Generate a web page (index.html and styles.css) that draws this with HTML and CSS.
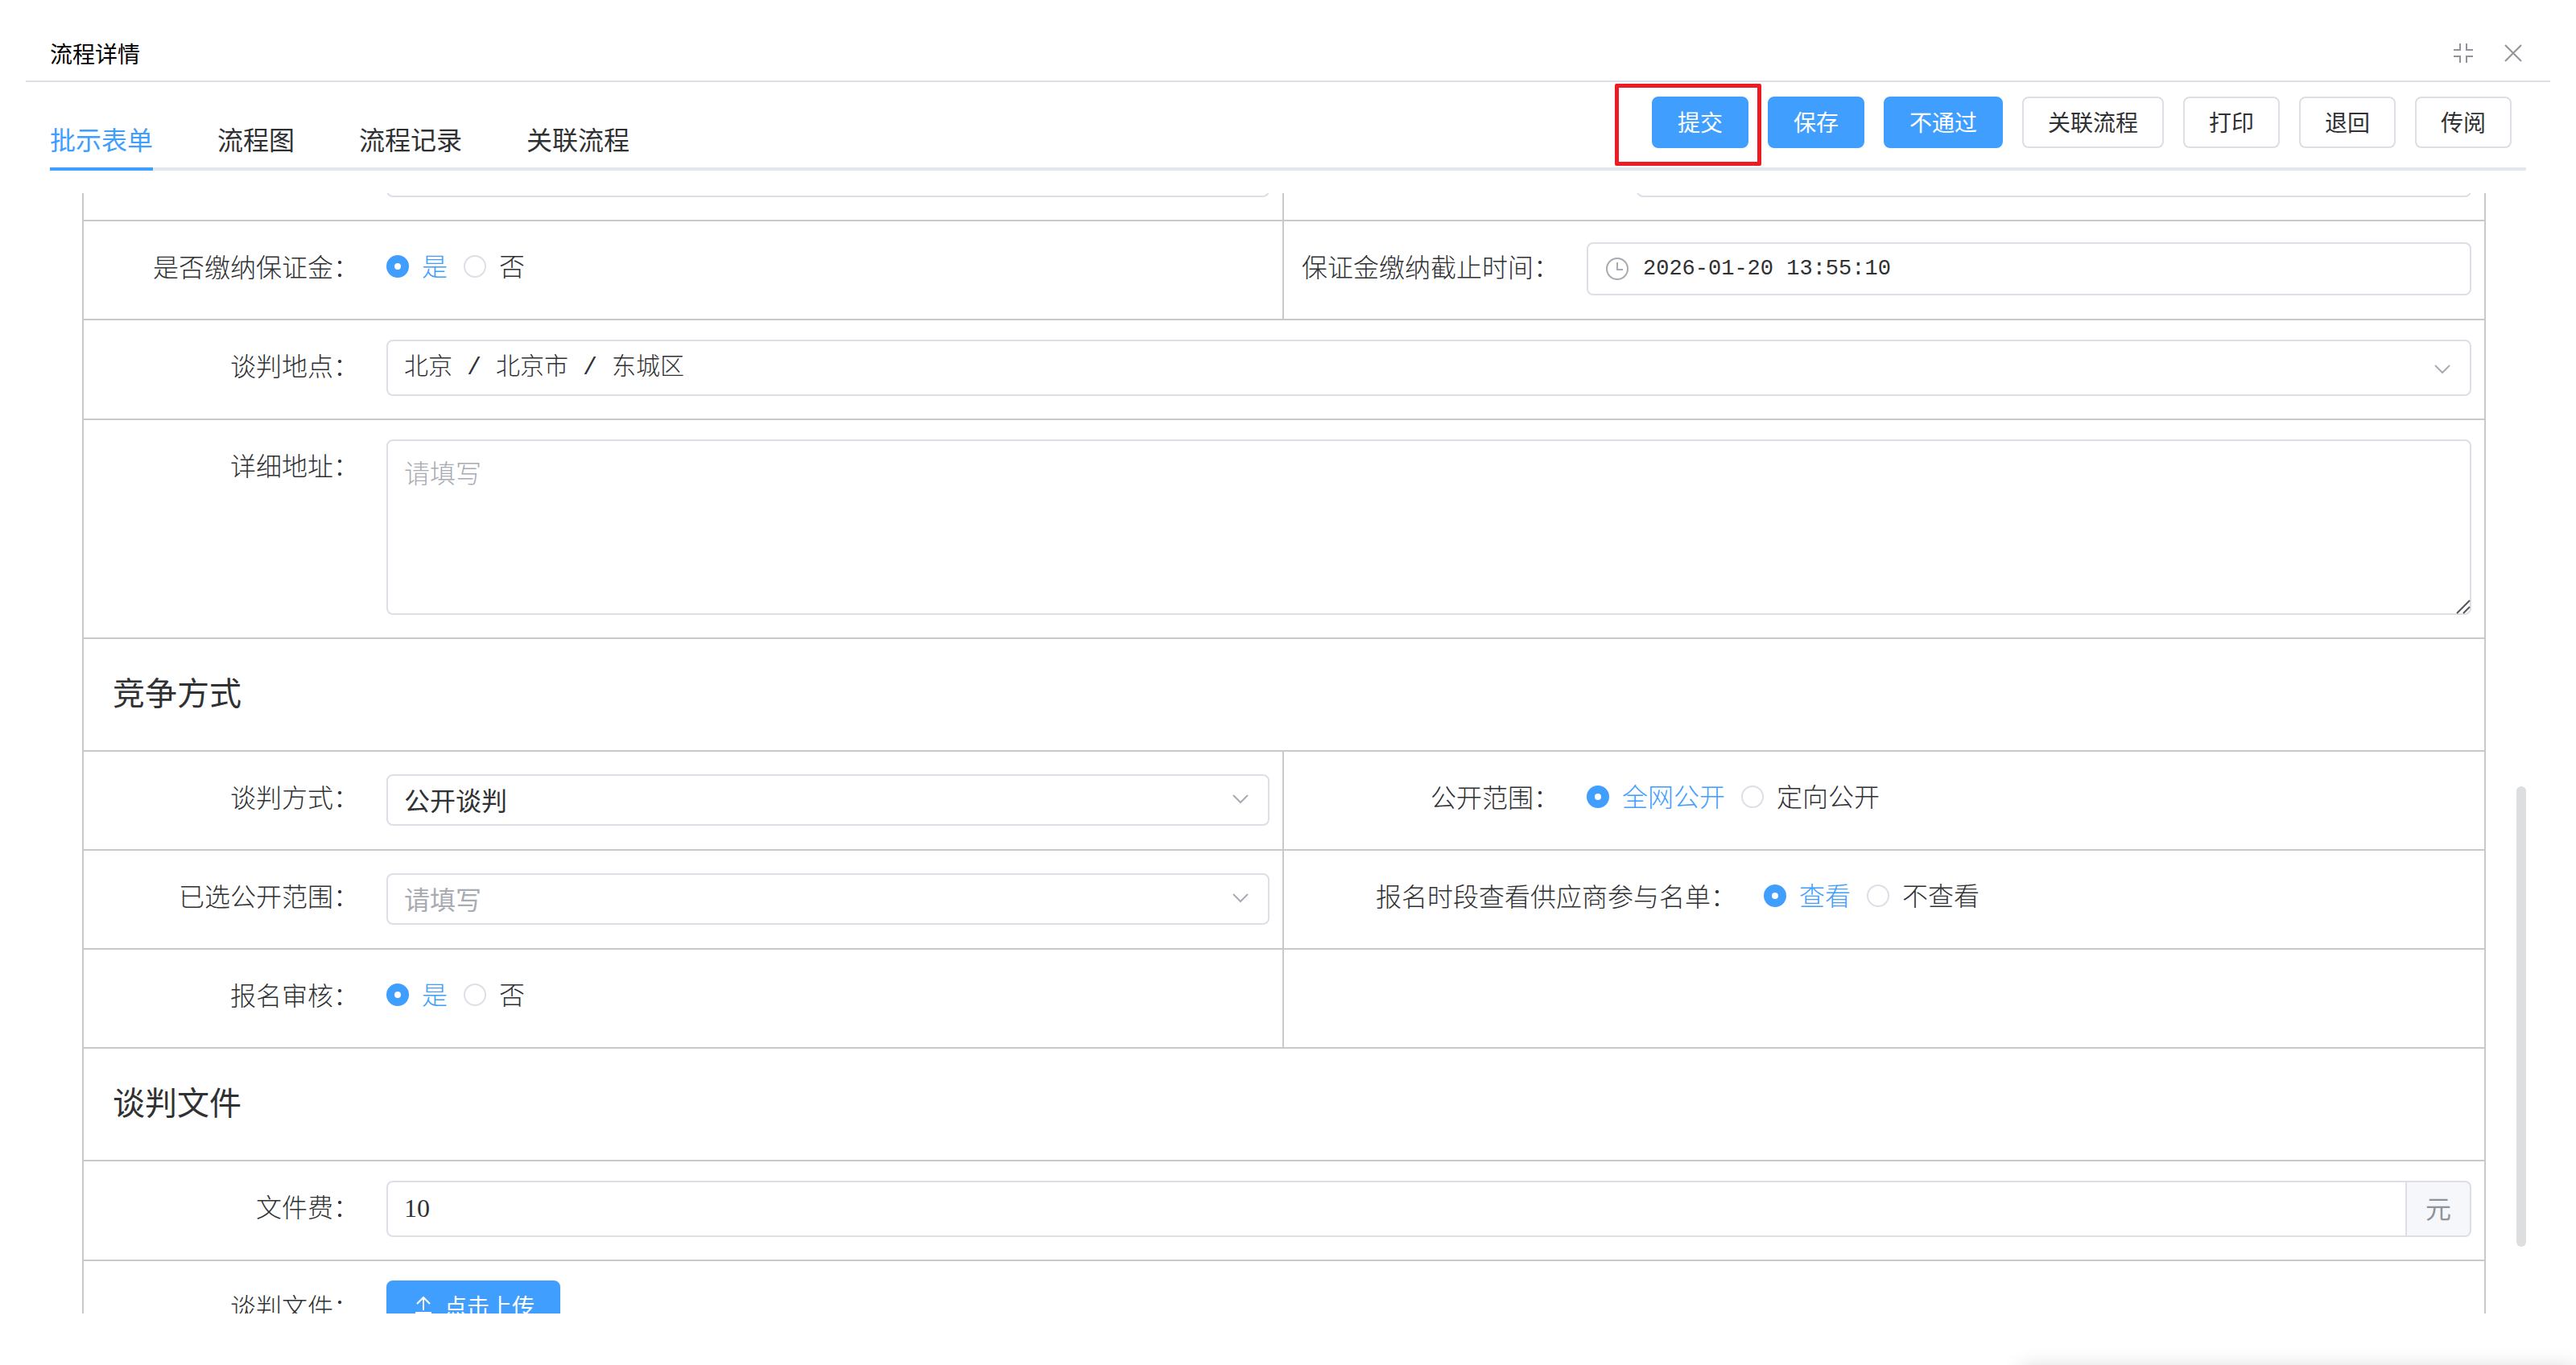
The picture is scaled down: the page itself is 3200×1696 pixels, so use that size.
FILE: index.html
```html
<!DOCTYPE html>
<html lang="zh-CN">
  <head>
    <meta charset="UTF-8" />
    <meta name="viewport" content="width=device-width, initial-scale=1.0" />
    <title>流程详情</title>
    <link rel="stylesheet" href="styles.css">
  </head>
  <body>
    <header class="dialog-header">
      <h1 class="dialog-title">流程详情</h1>
      <div class="window-tools">
        <button class="icon-btn" type="button" aria-label="还原">
          <svg width="28" height="28" viewBox="0 0 28 28">
            <path d="M10 2v8H2M18 2v8h8M10 26v-8H2M18 26v-8h8" />
          </svg>
        </button>
        <button class="icon-btn" type="button" aria-label="关闭">
          <svg width="28" height="28" viewBox="0 0 28 28">
            <path d="M4 4l20 20M24 4L4 24" />
          </svg>
        </button>
      </div>
    </header>

    <div class="toolbar">
      <nav class="tabs">
        <a class="tab active" href="#form">批示表单</a>
        <a class="tab" href="#chart">流程图</a>
        <a class="tab" href="#record">流程记录</a>
        <a class="tab" href="#related">关联流程</a>
      </nav>
      <div class="actions">
        <span class="marked"><button class="btn primary" type="button">提交</button></span>
        <button class="btn primary" type="button">保存</button>
        <button class="btn primary" type="button">不通过</button>
        <button class="btn" type="button">关联流程</button>
        <button class="btn" type="button">打印</button>
        <button class="btn" type="button">退回</button>
        <button class="btn" type="button">传阅</button>
      </div>
    </div>

    <main class="scroll-area">
      <form class="form" id="form">
        <div class="row two clipped">
          <div class="cell">
            <span class="label"></span>
            <input class="input" type="text" aria-label="保证金金额" />
          </div>
          <div class="cell">
            <span class="label medium"></span>
            <input class="input" type="text" aria-label="保证金账户" />
          </div>
        </div>

        <div class="row two">
          <div class="cell" role="radiogroup" aria-labelledby="deposit-label">
            <span class="label" id="deposit-label">是否缴纳保证金：</span>
            <div class="radios">
              <label class="radio"><input type="radio" name="deposit" checked /><span>是</span></label>
              <label class="radio"><input type="radio" name="deposit" /><span>否</span></label>
            </div>
          </div>
          <div class="cell">
            <label class="label" for="deadline">保证金缴纳截止时间：</label>
            <div class="field date">
              <svg class="clock" width="28" height="28" viewBox="0 0 28 28">
                <circle cx="14" cy="14" r="13" />
                <path d="M14 6v9h7" />
              </svg>
              <input class="input" id="deadline" type="text" value="2026-01-20 13:55:10" />
            </div>
          </div>
        </div>

        <div class="row">
          <div class="cell">
            <label class="label" for="place">谈判地点：</label>
            <div class="field">
              <select class="input tall place" id="place">
                <option>北京 / 北京市 / 东城区</option>
              </select>
              <svg class="arrow" width="20" height="12" viewBox="0 0 20 12"><path d="M1 1l9 9 9-9" /></svg>
            </div>
          </div>
        </div>

        <div class="row">
          <div class="cell">
            <label class="label" for="address">详细地址：</label>
            <div class="field">
              <textarea class="input" id="address" placeholder="请填写"></textarea>
              <svg class="grip" width="18" height="18" viewBox="0 0 18 18"><path d="M1 17L17 1M9 17l8-8" /></svg>
            </div>
          </div>
        </div>

        <h2 class="section">竞争方式</h2>

        <div class="row two">
          <div class="cell">
            <label class="label" for="mode">谈判方式：</label>
            <div class="field select">
              <select class="input" id="mode">
                <option>公开谈判</option>
              </select>
              <svg class="arrow" width="20" height="12" viewBox="0 0 20 12"><path d="M1 1l9 9 9-9" /></svg>
            </div>
          </div>
          <div class="cell" role="radiogroup" aria-labelledby="range-label">
            <span class="label" id="range-label">公开范围：</span>
            <div class="radios">
              <label class="radio"><input type="radio" name="range" checked /><span>全网公开</span></label>
              <label class="radio"><input type="radio" name="range" /><span>定向公开</span></label>
            </div>
          </div>
        </div>

        <div class="row two">
          <div class="cell">
            <label class="label" for="selected">已选公开范围：</label>
            <div class="field select">
              <select class="input empty" id="selected">
                <option>请填写</option>
              </select>
              <svg class="arrow" width="20" height="12" viewBox="0 0 20 12"><path d="M1 1l9 9 9-9" /></svg>
            </div>
          </div>
          <div class="cell" role="radiogroup" aria-labelledby="list-label">
            <span class="label wide" id="list-label">报名时段查看供应商参与名单：</span>
            <div class="radios">
              <label class="radio"><input type="radio" name="list" checked /><span>查看</span></label>
              <label class="radio"><input type="radio" name="list" /><span>不查看</span></label>
            </div>
          </div>
        </div>

        <div class="row two">
          <div class="cell" role="radiogroup" aria-labelledby="review-label">
            <span class="label" id="review-label">报名审核：</span>
            <div class="radios">
              <label class="radio"><input type="radio" name="review" checked /><span>是</span></label>
              <label class="radio"><input type="radio" name="review" /><span>否</span></label>
            </div>
          </div>
          <div class="cell"></div>
        </div>

        <h2 class="section">谈判文件</h2>

        <div class="row">
          <div class="cell">
            <label class="label" for="fee">文件费：</label>
            <div class="field group">
              <input class="input tall" id="fee" type="text" value="10" />
              <span class="unit">元</span>
            </div>
          </div>
        </div>

        <div class="row">
          <div class="cell">
            <span class="label">谈判文件：</span>
            <button class="btn primary upload" type="button">
              <svg width="28" height="28" viewBox="0 0 28 28">
                <path d="M14 20V5M6 12l8-8 8 8M4 23h20" />
              </svg>
              点击上传
            </button>
          </div>
        </div>
      </form>
      <div class="scrollbar"></div>
    </main>
    <div class="notice"></div>
  </body>
</html>
```

FILE: styles.css
```css
* {
  box-sizing: border-box;
}

body {
  margin: 0;
  height: 100vh;
  padding: 32px 32px 64px;
  display: flex;
  flex-direction: column;
  position: relative;
  overflow: hidden;
  background: #fff;
  color: #303133;
  font-family: "Noto Sans CJK SC", sans-serif;
  font-size: 32px;
}

button,
input,
select,
textarea {
  font-family: inherit;
  color: inherit;
}

svg {
  fill: none;
  stroke: #a8abb2;
  stroke-width: 2;
}

/* header */
.dialog-header {
  display: flex;
  justify-content: space-between;
  align-items: center;
  height: 70px;
  padding: 0 32px 0 30px;
  border-bottom: 2px solid #dcdfe6;
}

.dialog-title {
  margin: 0;
  font-size: 28px;
  font-weight: 400;
  color: #000;
}

.window-tools {
  display: flex;
  gap: 34px;
}

.icon-btn {
  display: flex;
  padding: 0;
  border: none;
  background: none;
  cursor: pointer;
}

.icon-btn svg {
  stroke: #909399;
}

/* tabs and actions */
.toolbar {
  display: flex;
  justify-content: space-between;
  align-items: flex-start;
  flex-shrink: 0;
  height: 110px;
  margin: 0 30px;
  border-bottom: 4px solid #e4e7ed;
}

.tabs {
  display: flex;
  gap: 80px;
  padding-top: 32px;
}

.tab {
  height: 78px;
  line-height: 76px;
  color: #303133;
  text-decoration: none;
}

.tab.active {
  color: #409eff;
  border-bottom: 4px solid #409eff;
}

.actions {
  display: flex;
  gap: 24px;
  padding: 18px 18px 0 0;
}

.btn {
  height: 64px;
  padding: 0 30px 2px;
  border: 2px solid #dcdfe6;
  border-radius: 8px;
  background: #fff;
  font-size: 28px;
  cursor: pointer;
}

.btn.primary {
  border-color: #409eff;
  background: #409eff;
  color: #fff;
}

.marked {
  position: relative;
}

.marked::before {
  content: "";
  position: absolute;
  inset: -16px -16px -22px -46px;
  border: 5px solid #ed1c24;
  border-radius: 2px;
  pointer-events: none;
}

/* form */
.scroll-area {
  flex: 1;
  min-height: 0;
  margin: 28px 30px 0;
  padding: 0 50px 0 40px;
  position: relative;
  overflow: hidden;
}

.form {
  border: solid #c9c9c9;
  border-width: 0 2px;
  font-weight: 300;
}

.row {
  display: grid;
  grid-template-columns: 1fr;
  border-bottom: 2px solid #c9c9c9;
}

.row.two {
  grid-template-columns: 1fr 1fr;
}

.cell {
  display: flex;
  align-items: flex-start;
  min-height: 121px;
  padding: 24px 16px 28px 0;
}

.row.two .cell:first-child {
  border-right: 2px solid #c9c9c9;
}

.row.clipped .cell {
  align-items: flex-end;
  height: 33px;
  min-height: 0;
  padding-top: 0;
  overflow: hidden;
}

.label {
  flex: 0 0 376px;
  padding-right: 34px;
  line-height: 62px;
  text-align: right;
  white-space: nowrap;
}

.label.medium {
  flex-basis: 438px;
}

.label.wide {
  flex-basis: 596px;
}

.field {
  flex: 1;
  display: flex;
  position: relative;
}

.field.select {
  padding-top: 4px;
}

.field.date {
  padding-top: 2px;
}

.input {
  flex: 1;
  width: 100%;
  min-width: 0;
  height: 64px;
  padding: 0 20px 2px;
  border: 2px solid #dcdfe6;
  border-radius: 8px;
  background: #fff;
  font-size: 32px;
  outline: none;
  appearance: none;
}

.input.tall {
  height: 70px;
}

.input::placeholder,
.input.empty {
  color: #a8abb2;
}

.input.place {
  padding-bottom: 0;
  font-family: "Liberation Mono", "Noto Sans CJK SC", monospace;
  font-size: 30px;
  font-weight: 300;
}

.date .input {
  height: 66px;
  padding: 0 20px 0 68px;
  font-family: "Liberation Mono", monospace;
  font-size: 27px;
}

textarea.input {
  height: 218px;
  padding: 14px 20px;
  line-height: 48px;
  font-weight: 300;
  resize: none;
}

.arrow {
  position: absolute;
  right: 26px;
  bottom: 27px;
}

.clock {
  position: absolute;
  left: 24px;
  top: 21px;
}

.grip {
  position: absolute;
  right: 1px;
  bottom: 1px;
  stroke: #555;
}

.radios {
  display: flex;
  gap: 20px;
}

.radio {
  display: flex;
  align-items: center;
  gap: 16px;
  height: 64px;
  cursor: pointer;
}

.radio span {
  padding-bottom: 4px;
}

.radio input {
  appearance: none;
  width: 28px;
  height: 28px;
  margin: 0;
  border: 2px solid #dcdfe6;
  border-radius: 50%;
  background: #fff;
}

.radio input:checked {
  border: 10px solid #409eff;
}

.radio input:checked + span {
  color: #409eff;
}

.section {
  margin: 0;
  height: 140px;
  padding-left: 36px;
  border-bottom: 2px solid #c9c9c9;
  font-size: 40px;
  font-weight: 400;
  line-height: 130px;
}

.group .input {
  border-radius: 8px 0 0 8px;
  font-family: "Liberation Serif", serif;
}

.unit {
  width: 80px;
  border: 2px solid #dcdfe6;
  border-left: none;
  border-radius: 0 8px 8px 0;
  background: #f5f7fa;
  color: #909399;
  font-weight: 400;
  line-height: 62px;
  text-align: center;
}

.upload {
  display: flex;
  align-items: center;
  gap: 12px;
}

.upload svg {
  stroke: #fff;
}

.scrollbar {
  position: absolute;
  right: 0;
  top: 737px;
  width: 12px;
  height: 572px;
  border-radius: 6px;
  background: #dddee0;
}

/* top edge of the message popup below the window */
.notice {
  position: absolute;
  left: 2510px;
  right: 0;
  top: 100%;
  height: 40px;
  box-shadow: 0 0 24px rgba(0, 0, 0, 0.12);
}
```
